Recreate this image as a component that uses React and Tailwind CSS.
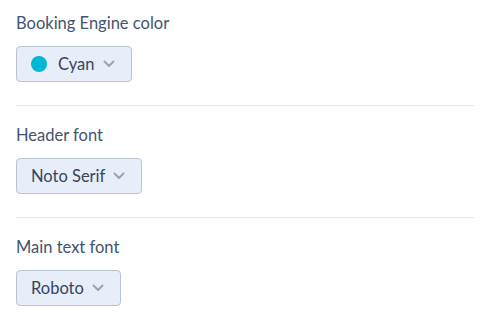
function Chevron() {
  return (
    <svg width="12" height="8" viewBox="0 0 12 8" fill="none" className="text-[#9aa4b3]">
      <path d="M1.5 1.5 L6 6 L10.5 1.5" stroke="currentColor" strokeWidth="2" strokeLinecap="round" strokeLinejoin="round" />
    </svg>
  );
}

function Select({ value, dot }) {
  return (
    <button
      type="button"
      className="flex h-9 items-center rounded-[4px] border border-[#b9c3d2] bg-[#e8eef9] pl-[14px] pr-4 text-[16.5px] text-[#36445e]"
    >
      {dot && <span className="mr-[11px] h-4 w-4 rounded-full bg-[#00b8d4]" />}
      <span>{value}</span>
      <span className="ml-2 flex">
        <Chevron />
      </span>
    </button>
  );
}

function Section({ label, children, first, last }) {
  return (
    <div
      className={`${first ? "pt-[11px]" : "pt-[17px]"} ${
        last ? "" : "pb-[23px] border-b border-[#e3e8ef]"
      }`}
    >
      <p className="text-[16.5px] leading-6 text-[#42546e]">{label}</p>
      <div className="mt-[11px] flex">{children}</div>
    </div>
  );
}

export default function App() {
  return (
    <div
      className="min-h-screen bg-white pl-4 pr-[7px]"
      style={{ fontFamily: "Lato, 'Open Sans', sans-serif" }}
    >
      <Section label="Booking Engine color" first>
        <Select value="Cyan" dot />
      </Section>
      <Section label="Header font">
        <Select value="Noto Serif" />
      </Section>
      <Section label="Main text font" last>
        <Select value="Roboto" />
      </Section>
    </div>
  );
}
